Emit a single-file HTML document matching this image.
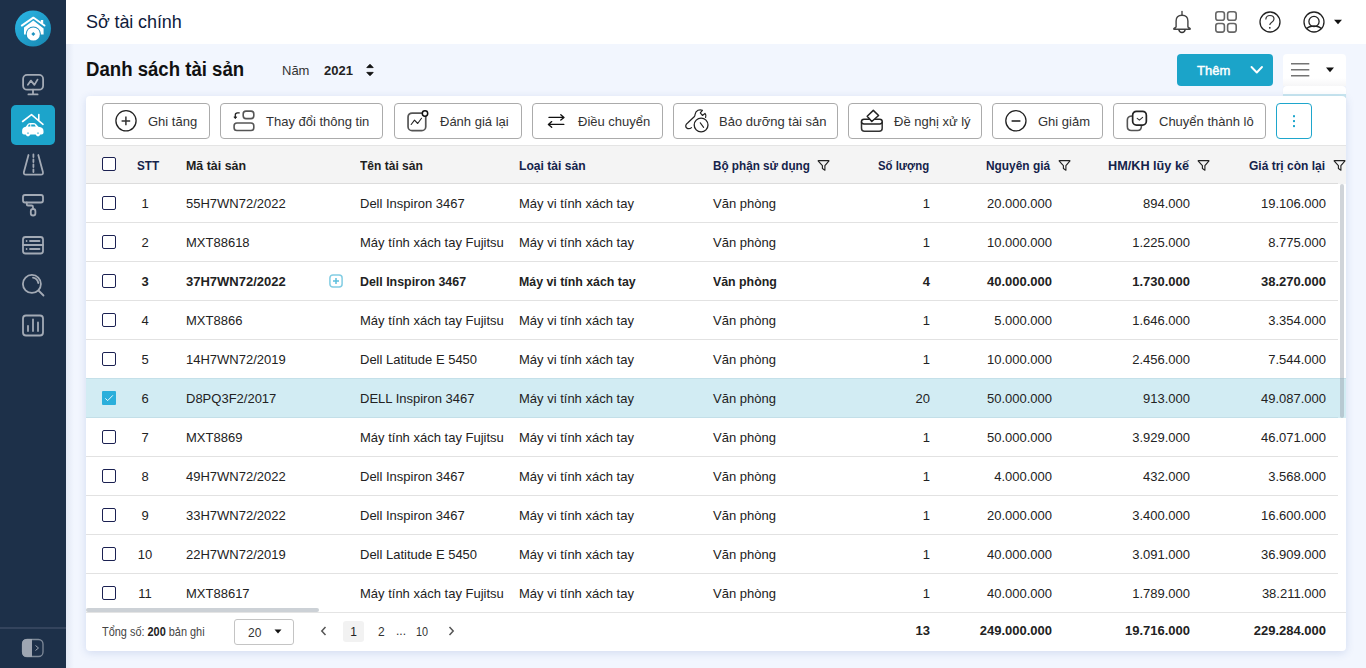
<!DOCTYPE html>
<html><head><meta charset="utf-8">
<style>
*{box-sizing:border-box;margin:0;padding:0}
html,body{width:1366px;height:668px;overflow:hidden;background:#f2f6fe;font-family:"Liberation Sans",sans-serif;color:#222}
.a{position:absolute}
.t13{font-size:13px;line-height:15px;white-space:nowrap}
.b{font-weight:700}
.btn{top:103px;height:36px;border:1px solid #ababab;border-radius:4px;background:#fff}
.btn span{position:absolute;top:10px;font-size:13px;line-height:15px;color:#333;white-space:nowrap}
.cb{position:absolute;left:16px;top:12px;width:14px;height:14px;border:1.5px solid #1b2152;border-radius:2px;background:#fff}
.c{position:absolute;top:12px;font-size:13px;line-height:15px;white-space:nowrap;color:#222}
.hc{position:absolute;top:12px;font-size:13px;line-height:15px;font-weight:700;white-space:nowrap}
.cond{display:inline-block;transform-origin:0 50%}
</style></head><body>

<div class="a" style="left:0;top:0;width:66px;height:668px;background:#1d3049"></div>
<svg class="a" style="left:0;top:0" width="66" height="668" viewBox="0 0 66 668">
 <defs><linearGradient id="lg" x1="0" y1="0" x2="1" y2="1"><stop offset="0" stop-color="#2bb8e6"/><stop offset="1" stop-color="#1786b0"/></linearGradient></defs>
 <circle cx="33" cy="28.5" r="18" fill="url(#lg)"/>
 <path d="M24 27.5 L33.3 20.6 L43.6 28.5 L43.6 34.5 L24 34.5 Z" fill="#fff"/>
 <path d="M21.8 25.6 L33.3 17.6 L44.5 25.6" stroke="#fff" stroke-width="1.9" fill="none" stroke-linecap="round" stroke-linejoin="round"/>
 <rect x="40.8" y="20" width="2.4" height="3.5" fill="#fff"/>
 <circle cx="33.3" cy="34" r="7.6" fill="#1d93c0"/>
 <circle cx="33.3" cy="34" r="6.6" fill="#fff"/>
 <path d="M33.3 32 L35.3 34 L33.3 36 L31.3 34 Z" fill="#1d93c0"/>
 <!-- monitor -->
 <rect x="23.1" y="74.9" width="20" height="14.8" rx="4" stroke="#a3aab5" fill="none" stroke-width="1.8" stroke-linecap="round" stroke-linejoin="round"/>
 <path d="M27.9 84.8 L30.9 80.6 L34.4 84.9 L37.5 79.6" stroke="#a3aab5" fill="none" stroke-width="1.8" stroke-linecap="round" stroke-linejoin="round" stroke-width="1.5"/>
 <path d="M33 89.7 L33 94.2 M28.4 94.4 L37.6 94.4" stroke="#a3aab5" fill="none" stroke-width="1.8" stroke-linecap="round" stroke-linejoin="round"/>
 <!-- active -->
 <rect x="11" y="105" width="44" height="40" rx="5" fill="#1ca4cb"/>
 <path d="M22.6 121.5 L31.5 114.6 L43 124.3" stroke="#fff" stroke-width="1.6" fill="none" stroke-linecap="round" stroke-linejoin="round"/>
 <path d="M38.8 114.6 L38.8 120" stroke="#fff" stroke-width="1.6" stroke-linecap="round"/>
 <path d="M22.1 131 Q22.1 127.2 25.8 126.8 L27.6 124.3 Q28.6 123 30.6 123 L33.2 123 Q35.2 123 36.4 124.4 L38.4 126.8 Q43.5 127.1 43.5 131 L43.5 132.8 Q43.5 134.5 41.5 134.5 L24 134.5 Q22.1 134.5 22.1 132.8 Z" fill="#fff"/>
 <circle cx="28" cy="134.3" r="2.1" fill="#fff"/><circle cx="38" cy="134.3" r="2.1" fill="#fff"/>
 <path d="M26.9 133.6 A1.1 1.1 0 0 1 29.1 133.6 Z M36.9 133.6 A1.1 1.1 0 0 1 39.1 133.6 Z" fill="#1ca4cb"/>
 <path d="M27.8 126.4 L28.9 124.6 L30.3 124.6 L30.3 126.4 Z M31.2 126.4 L31.2 124.6 L34.6 124.6 L35.8 126.4 Z" fill="#1ca4cb"/>
 <!-- road -->
 <path d="M28.5 155 L23.9 172 Q23.3 174.6 25.9 174.6 L40.9 174.6 Q43.5 174.6 42.9 172 L38.3 155" stroke="#a3aab5" fill="none" stroke-width="1.8" stroke-linecap="round" stroke-linejoin="round"/>
 <path d="M33.4 154.5 L33.4 173" stroke="#a3aab5" fill="none" stroke-width="1.8" stroke-linecap="round" stroke-linejoin="round" stroke-width="1.2" stroke-linecap="butt" stroke-dasharray="2.6 2.4"/>
 <!-- roller -->
 <rect x="23" y="195" width="20" height="7.5" rx="2" stroke="#a3aab5" fill="none" stroke-width="1.8" stroke-linecap="round" stroke-linejoin="round"/>
 <path d="M26.8 202.5 L26.8 204.5 Q26.8 205.5 28 205.5 L31.5 205.5 Q33 205.5 33 207 L33 209" stroke="#a3aab5" fill="none" stroke-width="1.8" stroke-linecap="round" stroke-linejoin="round"/>
 <rect x="30.8" y="209" width="4.6" height="6.5" rx="2.3" stroke="#a3aab5" fill="none" stroke-width="1.8" stroke-linecap="round" stroke-linejoin="round"/>
 <!-- server -->
 <rect x="23" y="237" width="20" height="16.5" rx="2.5" stroke="#a3aab5" fill="none" stroke-width="1.8" stroke-linecap="round" stroke-linejoin="round"/>
 <path d="M23 245 L43 245" stroke="#a3aab5" fill="none" stroke-width="1.8" stroke-linecap="round" stroke-linejoin="round"/>
 <path d="M26.6 241 L26.6 241 M30 241 L39.5 241 M26.6 249 L26.6 249 M30 249 L39.5 249" stroke="#a3aab5" fill="none" stroke-width="1.8" stroke-linecap="round" stroke-linejoin="round"/>
 <!-- search -->
 <circle cx="31.9" cy="283.9" r="9" stroke="#a3aab5" fill="none" stroke-width="1.8" stroke-linecap="round" stroke-linejoin="round"/>
 <path d="M38.5 290.5 L43.5 295.5" stroke="#a3aab5" fill="none" stroke-width="1.8" stroke-linecap="round" stroke-linejoin="round"/>
 <path d="M33 277.6 Q37.5 278.5 38.3 283" stroke="#a3aab5" fill="none" stroke-width="1.8" stroke-linecap="round" stroke-linejoin="round" stroke-width="1.5"/>
 <!-- chart -->
 <rect x="23" y="315.5" width="20" height="20" rx="3" stroke="#a3aab5" fill="none" stroke-width="1.8" stroke-linecap="round" stroke-linejoin="round"/>
 <path d="M28 325.8 L28 331 M33 319.5 L33 331 M38 322.5 L38 331" stroke="#a3aab5" fill="none" stroke-width="1.8" stroke-linecap="round" stroke-linejoin="round"/>
 <!-- bottom -->
 <rect x="0" y="627" width="66" height="2" fill="#34445d"/>
 <rect x="22.5" y="639.5" width="20.5" height="17" rx="4.5" fill="none" stroke="#7f8a99" stroke-width="1.3"/>
 <path d="M27 639 L32 639 L32 657 L27 657 Q22 657 22 652 L22 644 Q22 639 27 639 Z" fill="#9ea6b2"/>
 <path d="M35.5 645.5 L38.5 648 L35.5 650.5" stroke="#9ea6b2" stroke-width="1" fill="none"/>
</svg>


<div class="a" style="left:66px;top:0;width:1300px;height:44px;background:#fff"></div>
<div class="a" style="left:86px;top:11px;font-size:18px;line-height:22px;color:#0f1b3b;white-space:nowrap;letter-spacing:-0.1px">Sở tài chính</div>
<svg class="a" style="left:1160px;top:0" width="206" height="44" viewBox="1160 0 206 44">
 <path d="M1182 11.6 L1182 15" stroke="#555" stroke-width="1.5" stroke-linecap="round"/>
 <path d="M1176.1 26.8 L1176.1 21 Q1176.1 15.2 1182 15.2 Q1187.9 15.2 1187.9 21 L1187.9 26.8 Q1188.3 27.5 1190 28.4 Q1190.9 29.3 1189.6 29.3 L1174.4 29.3 Q1173.1 29.3 1174 28.4 Q1175.7 27.5 1176.1 26.8 Z" fill="none" stroke="#444" stroke-width="1.4" stroke-linejoin="round"/>
 <path d="M1178.8 29.6 Q1179.4 32.5 1182 32.5 Q1184.6 32.5 1185.2 29.6" fill="none" stroke="#333" stroke-width="1.4"/>
 <rect x="1215.8" y="11.7" width="8.6" height="8.6" rx="2.3" fill="none" stroke="#666" stroke-width="1.6"/>
 <rect x="1227.6" y="11.7" width="8.6" height="8.6" rx="2.3" fill="none" stroke="#666" stroke-width="1.6"/>
 <rect x="1215.8" y="23.5" width="8.6" height="8.6" rx="2.3" fill="none" stroke="#666" stroke-width="1.6"/>
 <rect x="1227.6" y="23.5" width="8.6" height="8.6" rx="2.3" fill="none" stroke="#666" stroke-width="1.6"/>
 <circle cx="1270" cy="22" r="10" fill="none" stroke="#222" stroke-width="1.3"/>
 <path d="M1265.8 19.5 Q1266 15.5 1270 15.5 Q1274 15.5 1274 19 Q1274 21 1271.5 22.5 Q1269.8 23.8 1269.8 25" fill="none" stroke="#333" stroke-width="1.2"/>
 <circle cx="1269.8" cy="27.8" r="0.9" fill="#222"/>
 <circle cx="1314" cy="22" r="10" fill="none" stroke="#222" stroke-width="1.3"/>
 <circle cx="1314" cy="21.5" r="5.1" fill="none" stroke="#222" stroke-width="1.3"/>
 <path d="M1306.5 28.8 Q1309 26 1314 26 Q1319 26 1321.5 28.8" fill="none" stroke="#222" stroke-width="1.3"/>
 <path d="M1334 19.8 L1342 19.8 L1338 24.2 Z" fill="#111"/>
</svg>


<div class="a" style="left:86px;top:57px;font-size:20px;line-height:24px;font-weight:700;color:#111;white-space:nowrap"><span class="cond" style="transform:scaleX(.93)">Danh sách tài sản</span></div>
<div class="a t13" style="left:282px;top:63px;color:#333">Năm</div>
<div class="a t13 b" style="left:324px;top:63px;color:#222">2021</div>
<svg class="a" style="left:364px;top:62px" width="12" height="16" viewBox="0 0 12 16"><path d="M2.8 5.6 L6 2.3 L9.2 5.6 Z M2.8 10.4 L6 13.7 L9.2 10.4 Z" fill="#111" stroke="#111" stroke-width="0.9" stroke-linejoin="round"/></svg>
<div class="a" style="left:1177px;top:54px;width:96px;height:32px;background:#1ba4c9;border-radius:4px"></div>
<div class="a t13" style="left:1197px;top:63px;color:#fff;-webkit-text-stroke:0.45px #fff">Thêm</div>
<svg class="a" style="left:1248px;top:62px" width="18" height="16" viewBox="0 0 18 16"><path d="M3.5 5 L8.8 10.5 L14 5" fill="none" stroke="#fff" stroke-width="1.9" stroke-linecap="round" stroke-linejoin="round"/></svg>
<div class="a" style="left:1283px;top:86px;width:63px;height:20px;background:#fff;border-radius:4px;box-shadow:0 -1px 2px rgba(0,0,0,.03)"></div>
<div class="a" style="left:1283px;top:94px;width:63px;height:4px;background:#c9e7f0"></div>
<div class="a" style="left:1283px;top:54px;width:63px;height:32px;background:linear-gradient(#fff 0,#fff 24px,#f6f6f7 32px);border-radius:4px 4px 0 0"></div>
<svg class="a" style="left:1283px;top:54px" width="63" height="32" viewBox="0 0 63 32"><path d="M8 9.8 L26.3 9.8 M8 15.8 L26.3 15.8 M8 21.8 L26.3 21.8" stroke="#747474" stroke-width="1.6"/><path d="M43 13.5 L51 13.5 L47 18.3 Z" fill="#111"/></svg>

<div class="a" style="left:86px;top:96px;width:1260px;height:555px;background:#fff;border-radius:4px;box-shadow:0 2px 8px rgba(50,90,170,.16)"></div>
<div class="btn a" style="left:102px;width:108px"><svg width="30" height="30" viewBox="0 0 30 30" style="position:absolute;left:9px;top:2px"><circle cx="14" cy="14.8" r="10.1" fill="none" stroke="#222" stroke-width="1.3"/><path d="M9.6 15 L18.2 15 M13.9 10.6 L13.9 19.2" fill="none" stroke="#333" stroke-width="1.5"/></svg><span style="left:45px">Ghi tăng</span></div><div class="btn a" style="left:220px;width:163px"><svg width="30" height="30" viewBox="0 0 30 30" style="position:absolute;left:9px;top:2px"><rect x="13.2" y="5.1" width="10.6" height="7.5" rx="2.8" fill="none" stroke="#555" stroke-width="1.6"/><rect x="4.1" y="17" width="19.7" height="7.5" rx="2.8" fill="none" stroke="#555" stroke-width="1.6"/><path d="M9.7 6.9 L7.5 6.9 Q5.3 6.9 5.3 9.1 L5.3 11" fill="none" stroke="#222" stroke-width="1.3"/><path d="M3.9 10.9 L5.3 12.7 L6.7 10.9 Z" fill="#222" stroke="#222" stroke-width="0.8" stroke-linejoin="round"/></svg><span style="left:45px">Thay đổi thông tin</span></div><div class="btn a" style="left:394px;width:128px"><svg width="30" height="30" viewBox="0 0 30 30" style="position:absolute;left:9px;top:2px"><rect x="4.05" y="7.05" width="17.7" height="17.6" rx="4" fill="none" stroke="#555" stroke-width="1.7"/><circle cx="21" cy="7.5" r="2.7" fill="#fff" stroke="#111" stroke-width="1.5"/><path d="M7.2 18.5 L10.5 14.2 L13.7 17.5 L17.5 12.3" fill="none" stroke="#222" stroke-width="1.1" stroke-linecap="round" stroke-linejoin="round"/></svg><span style="left:45px">Đánh giá lại</span></div><div class="btn a" style="left:532px;width:131px"><svg width="30" height="30" viewBox="0 0 30 30" style="position:absolute;left:9px;top:2px"><path d="M7 11.4 L22 11.4 M18.8 8.7 L22 11.4 L18.8 14.1 M21.8 18.4 L6.4 18.4 M9.7 15.6 L6.4 18.4 L9.7 21.2" fill="none" stroke="#111" stroke-width="1.35" stroke-linecap="round" stroke-linejoin="round"/></svg><span style="left:45px">Điều chuyển</span></div><div class="btn a" style="left:673px;width:165px"><svg width="30" height="30" viewBox="0 0 30 30" style="position:absolute;left:9px;top:2px"><circle cx="18.1" cy="19" r="6.9" fill="none" stroke="#222" stroke-width="1.3"/><path d="M17.3 16.8 L20.6 21.3" fill="none" stroke="#222" stroke-width="1.1" stroke-linecap="round"/><path d="M8.5 21.6 Q7 23 4.7 22.6 Q2.4 21.8 2.8 19.4 Q3.1 18 4.6 17 L11.2 10.8 Q12 10 12.1 8.3 Q12.5 5.5 15 4.3 Q17.2 3.3 19.4 4.3 L17.3 6.9 L19.4 9.4 L22 7.4 Q23.5 9 22.6 11.5" fill="none" stroke="#222" stroke-width="1.2" stroke-linejoin="round" stroke-linecap="round"/></svg><span style="left:45px">Bảo dưỡng tài sản</span></div><div class="btn a" style="left:848px;width:134px"><svg width="30" height="30" viewBox="0 0 30 30" style="position:absolute;left:9px;top:2px"><path d="M3.5 15.6 L3.5 22.3 Q3.5 25.3 6.5 25.3 L21.2 25.3 Q24.2 25.3 24.2 22.3 L24.2 15.6" fill="none" stroke="#333" stroke-width="1.5"/><path d="M6 13.2 Q3.5 13.2 3.5 15.6 Q3.5 18 6 18 L21.7 18 Q24.2 18 24.2 15.6 Q24.2 13.2 21.7 13.2 Z" fill="#fff" stroke="#222" stroke-width="1.5"/><path d="M15.3 4.4 L20.6 9.5 L13.8 15.5 L9.2 10.2 Z" fill="#fff" stroke="#222" stroke-width="1.5" stroke-linejoin="round"/></svg><span style="left:45px">Đề nghị xử lý</span></div><div class="btn a" style="left:992px;width:111px"><svg width="30" height="30" viewBox="0 0 30 30" style="position:absolute;left:9px;top:2px"><circle cx="13.9" cy="14.8" r="10.1" fill="none" stroke="#222" stroke-width="1.3"/><path d="M9.6 15 L18.4 15" fill="none" stroke="#333" stroke-width="1.7"/></svg><span style="left:45px">Ghi giảm</span></div><div class="btn a" style="left:1113px;width:153px"><svg width="30" height="30" viewBox="0 0 30 30" style="position:absolute;left:9px;top:2px"><path d="M9.6 9.95 Q4.35 9.95 4.35 14 L4.35 20.5 Q4.35 24.45 8.35 24.45 L14.5 24.45 Q18.45 24.45 18.45 19.7" fill="none" stroke="#555" stroke-width="1.6"/><rect x="9.65" y="5.35" width="13.7" height="13.7" rx="3.8" fill="#fff" stroke="#222" stroke-width="1.7"/><path d="M14.2 12.3 L16.4 14.2 L19.6 11.3" fill="none" stroke="#333" stroke-width="1.1" stroke-linecap="round" stroke-linejoin="round"/></svg><span style="left:45px">Chuyển thành lô</span></div>
<div class="a" style="left:1276px;top:103px;width:36px;height:36px;border:1.4px solid #1ea6cc;border-radius:4px;background:#fff"></div>
<svg class="a" style="left:1276px;top:103px" width="36" height="36"><rect x="17" y="12.2" width="2" height="2" fill="#1ea6cc"/><rect x="17" y="17.1" width="2" height="2" fill="#1ea6cc"/><rect x="17" y="22.1" width="2" height="2" fill="#1ea6cc"/></svg>
<div class="a" style="left:86px;top:145px;width:1260px;height:39px;background:#f4f4f4;border-top:1px solid #e4e4e4"></div>
<div class="a" style="left:86px;top:183px;width:1252px;height:1px;background:#dcdcdc"></div>
<div class="a" style="left:86px;top:146px;width:1252px;height:38px">
 <div class="cb" style="top:11px"></div>
 <div class="hc" style="left:51px;color:#15234b"><span class="cond" style="transform:scaleX(0.9)">STT</span></div>
 <div class="hc" style="left:100px;color:#1e1e1e"><span class="cond" style="transform:scaleX(0.955)">Mã tài sản</span></div>
 <div class="hc" style="left:274px;color:#1e1e1e"><span class="cond" style="transform:scaleX(0.925)">Tên tài sản</span></div>
 <div class="hc" style="left:433px;color:#15234b"><span class="cond" style="transform:scaleX(0.93)">Loại tài sản</span></div>
 <div class="hc" style="left:627px;color:#15234b"><span class="cond" style="transform:scaleX(0.9)">Bộ phận sử dụng</span></div>
 <svg width="13" height="13" viewBox="0 0 13 13" style="position:absolute;top:13px;left:731px"><path d="M1.5 1.6 L11.6 1.6 Q12.2 1.6 11.8 2.2 L7.9 6.6 L7.9 11.2 L5.4 9.6 L5.4 6.6 L1.3 2.2 Q0.9 1.6 1.5 1.6 Z" fill="none" stroke="#222" stroke-width="1.15" stroke-linejoin="round"/></svg>
 <div class="hc" style="left:792px;color:#15234b"><span class="cond" style="transform:scaleX(0.875)">Số lượng</span></div>
 <div class="hc" style="left:900px;color:#15234b"><span class="cond" style="transform:scaleX(0.915)">Nguyên giá</span></div>
 <svg width="13" height="13" viewBox="0 0 13 13" style="position:absolute;top:13px;left:972px"><path d="M1.5 1.6 L11.6 1.6 Q12.2 1.6 11.8 2.2 L7.9 6.6 L7.9 11.2 L5.4 9.6 L5.4 6.6 L1.3 2.2 Q0.9 1.6 1.5 1.6 Z" fill="none" stroke="#222" stroke-width="1.15" stroke-linejoin="round"/></svg>
 <div class="hc" style="left:1022px;color:#15234b"><span class="cond" style="transform:scaleX(0.975)">HM/KH lũy kế</span></div>
 <svg width="13" height="13" viewBox="0 0 13 13" style="position:absolute;top:13px;left:1111px"><path d="M1.5 1.6 L11.6 1.6 Q12.2 1.6 11.8 2.2 L7.9 6.6 L7.9 11.2 L5.4 9.6 L5.4 6.6 L1.3 2.2 Q0.9 1.6 1.5 1.6 Z" fill="none" stroke="#222" stroke-width="1.15" stroke-linejoin="round"/></svg>
 <div class="hc" style="left:1163px;color:#15234b"><span class="cond" style="transform:scaleX(0.923)">Giá trị còn lại</span></div>
 <svg width="13" height="13" viewBox="0 0 13 13" style="position:absolute;top:13px;left:1247px"><path d="M1.5 1.6 L11.6 1.6 Q12.2 1.6 11.8 2.2 L7.9 6.6 L7.9 11.2 L5.4 9.6 L5.4 6.6 L1.3 2.2 Q0.9 1.6 1.5 1.6 Z" fill="none" stroke="#222" stroke-width="1.15" stroke-linejoin="round"/></svg>
</div>
<div class="a" style="left:86px;top:184px;width:1252px;height:39px;border-bottom:1px solid #e2e2e2"><div class="cb"></div><div class="c" style="left:44px;width:30px;text-align:center;">1</div><div class="c" style="left:100px;">55H7WN72/2022</div><div class="c" style="left:274px;">Dell Inspiron 3467</div><div class="c" style="left:433px;">Máy vi tính xách tay</div><div class="c" style="left:627px;">Văn phòng</div><div class="c" style="left:644px;width:200px;text-align:right;">1</div><div class="c" style="left:766px;width:200px;text-align:right;">20.000.000</div><div class="c" style="left:904px;width:200px;text-align:right;">894.000</div><div class="c" style="left:1040px;width:200px;text-align:right;">19.106.000</div></div><div class="a" style="left:86px;top:223px;width:1252px;height:39px;border-bottom:1px solid #e2e2e2"><div class="cb"></div><div class="c" style="left:44px;width:30px;text-align:center;">2</div><div class="c" style="left:100px;">MXT88618</div><div class="c" style="left:274px;">Máy tính xách tay Fujitsu</div><div class="c" style="left:433px;">Máy vi tính xách tay</div><div class="c" style="left:627px;">Văn phòng</div><div class="c" style="left:644px;width:200px;text-align:right;">1</div><div class="c" style="left:766px;width:200px;text-align:right;">10.000.000</div><div class="c" style="left:904px;width:200px;text-align:right;">1.225.000</div><div class="c" style="left:1040px;width:200px;text-align:right;">8.775.000</div></div><div class="a" style="left:86px;top:262px;width:1252px;height:39px;border-bottom:1px solid #e2e2e2"><div class="cb"></div><div class="c" style="left:44px;width:30px;text-align:center;font-weight:700;">3</div><div class="c" style="left:100px;font-weight:700;">37H7WN72/2022</div><svg width="14" height="14" style="position:absolute;left:243px;top:12px" viewBox="0 0 14 14"><rect x="0.9" y="0.9" width="12.2" height="12.2" rx="3" fill="none" stroke="#82cde3" stroke-width="1.5"/><path d="M4 7 L10 7 M7 4 L7 10" stroke="#5bbfdd" stroke-width="1.5"/></svg><div class="c" style="left:274px;font-weight:700;"><span class="cond" style="transform:scaleX(0.953)">Dell Inspiron 3467</span></div><div class="c" style="left:433px;font-weight:700;"><span class="cond" style="transform:scaleX(0.95)">Máy vi tính xách tay</span></div><div class="c" style="left:627px;font-weight:700;"><span class="cond" style="transform:scaleX(0.95)">Văn phòng</span></div><div class="c" style="left:644px;width:200px;text-align:right;font-weight:700;">4</div><div class="c" style="left:766px;width:200px;text-align:right;font-weight:700;">40.000.000</div><div class="c" style="left:904px;width:200px;text-align:right;font-weight:700;">1.730.000</div><div class="c" style="left:1040px;width:200px;text-align:right;font-weight:700;">38.270.000</div></div><div class="a" style="left:86px;top:301px;width:1252px;height:39px;border-bottom:1px solid #e2e2e2"><div class="cb"></div><div class="c" style="left:44px;width:30px;text-align:center;">4</div><div class="c" style="left:100px;">MXT8866</div><div class="c" style="left:274px;">Máy tính xách tay Fujitsu</div><div class="c" style="left:433px;">Máy vi tính xách tay</div><div class="c" style="left:627px;">Văn phòng</div><div class="c" style="left:644px;width:200px;text-align:right;">1</div><div class="c" style="left:766px;width:200px;text-align:right;">5.000.000</div><div class="c" style="left:904px;width:200px;text-align:right;">1.646.000</div><div class="c" style="left:1040px;width:200px;text-align:right;">3.354.000</div></div><div class="a" style="left:86px;top:340px;width:1252px;height:39px;border-bottom:1px solid #e2e2e2"><div class="cb"></div><div class="c" style="left:44px;width:30px;text-align:center;">5</div><div class="c" style="left:100px;">14H7WN72/2019</div><div class="c" style="left:274px;">Dell Latitude E 5450</div><div class="c" style="left:433px;">Máy vi tính xách tay</div><div class="c" style="left:627px;">Văn phòng</div><div class="c" style="left:644px;width:200px;text-align:right;">1</div><div class="c" style="left:766px;width:200px;text-align:right;">10.000.000</div><div class="c" style="left:904px;width:200px;text-align:right;">2.456.000</div><div class="c" style="left:1040px;width:200px;text-align:right;">7.544.000</div></div><div class="a" style="left:86px;top:378px;width:1260px;height:40px;background:#d2ecf3;border-top:1px solid #c4e0e9"></div><div class="a" style="left:86px;top:379px;width:1252px;height:39px;border-bottom:1px solid #c3dfe8"><div class="cb" style="background:#2bafdb;border:none;width:14px;height:14px;border-radius:1px"><svg width="14" height="14" style="position:absolute;left:0;top:0"><path d="M3.3 7.4 L5.7 9.6 L10.9 4.3" fill="none" stroke="#fff" stroke-width="0.9"/></svg></div><div class="c" style="left:44px;width:30px;text-align:center;">6</div><div class="c" style="left:100px;">D8PQ3F2/2017</div><div class="c" style="left:274px;">DELL Inspiron 3467</div><div class="c" style="left:433px;">Máy vi tính xách tay</div><div class="c" style="left:627px;">Văn phòng</div><div class="c" style="left:644px;width:200px;text-align:right;">20</div><div class="c" style="left:766px;width:200px;text-align:right;">50.000.000</div><div class="c" style="left:904px;width:200px;text-align:right;">913.000</div><div class="c" style="left:1040px;width:200px;text-align:right;">49.087.000</div></div><div class="a" style="left:86px;top:418px;width:1252px;height:39px;border-bottom:1px solid #e2e2e2"><div class="cb"></div><div class="c" style="left:44px;width:30px;text-align:center;">7</div><div class="c" style="left:100px;">MXT8869</div><div class="c" style="left:274px;">Máy tính xách tay Fujitsu</div><div class="c" style="left:433px;">Máy vi tính xách tay</div><div class="c" style="left:627px;">Văn phòng</div><div class="c" style="left:644px;width:200px;text-align:right;">1</div><div class="c" style="left:766px;width:200px;text-align:right;">50.000.000</div><div class="c" style="left:904px;width:200px;text-align:right;">3.929.000</div><div class="c" style="left:1040px;width:200px;text-align:right;">46.071.000</div></div><div class="a" style="left:86px;top:457px;width:1252px;height:39px;border-bottom:1px solid #e2e2e2"><div class="cb"></div><div class="c" style="left:44px;width:30px;text-align:center;">8</div><div class="c" style="left:100px;">49H7WN72/2022</div><div class="c" style="left:274px;">Dell Inspiron 3467</div><div class="c" style="left:433px;">Máy vi tính xách tay</div><div class="c" style="left:627px;">Văn phòng</div><div class="c" style="left:644px;width:200px;text-align:right;">1</div><div class="c" style="left:766px;width:200px;text-align:right;">4.000.000</div><div class="c" style="left:904px;width:200px;text-align:right;">432.000</div><div class="c" style="left:1040px;width:200px;text-align:right;">3.568.000</div></div><div class="a" style="left:86px;top:496px;width:1252px;height:39px;border-bottom:1px solid #e2e2e2"><div class="cb"></div><div class="c" style="left:44px;width:30px;text-align:center;">9</div><div class="c" style="left:100px;">33H7WN72/2022</div><div class="c" style="left:274px;">Dell Inspiron 3467</div><div class="c" style="left:433px;">Máy vi tính xách tay</div><div class="c" style="left:627px;">Văn phòng</div><div class="c" style="left:644px;width:200px;text-align:right;">1</div><div class="c" style="left:766px;width:200px;text-align:right;">20.000.000</div><div class="c" style="left:904px;width:200px;text-align:right;">3.400.000</div><div class="c" style="left:1040px;width:200px;text-align:right;">16.600.000</div></div><div class="a" style="left:86px;top:535px;width:1252px;height:39px;border-bottom:1px solid #e2e2e2"><div class="cb"></div><div class="c" style="left:44px;width:30px;text-align:center;">10</div><div class="c" style="left:100px;">22H7WN72/2019</div><div class="c" style="left:274px;">Dell Latitude E 5450</div><div class="c" style="left:433px;">Máy vi tính xách tay</div><div class="c" style="left:627px;">Văn phòng</div><div class="c" style="left:644px;width:200px;text-align:right;">1</div><div class="c" style="left:766px;width:200px;text-align:right;">40.000.000</div><div class="c" style="left:904px;width:200px;text-align:right;">3.091.000</div><div class="c" style="left:1040px;width:200px;text-align:right;">36.909.000</div></div><div class="a" style="left:86px;top:574px;width:1252px;height:39px;border-bottom:1px solid #e2e2e2"><div class="cb"></div><div class="c" style="left:44px;width:30px;text-align:center;">11</div><div class="c" style="left:100px;">MXT88617</div><div class="c" style="left:274px;">Máy tính xách tay Fujitsu</div><div class="c" style="left:433px;">Máy vi tính xách tay</div><div class="c" style="left:627px;">Văn phòng</div><div class="c" style="left:644px;width:200px;text-align:right;">1</div><div class="c" style="left:766px;width:200px;text-align:right;">40.000.000</div><div class="c" style="left:904px;width:200px;text-align:right;">1.789.000</div><div class="c" style="left:1040px;width:200px;text-align:right;">38.211.000</div></div>
<div class="a" style="left:1340px;top:184px;width:4px;height:234px;border-radius:2px;background:rgba(150,160,170,.45)"></div>
<div class="a" style="left:86px;top:608px;width:233px;height:4px;border-radius:2px;background:#ccd1d6"></div>
<div class="a" style="left:86px;top:612px;width:1260px;height:1px;background:#e4e4e4"></div>
<div class="a" style="left:102px;top:625px;font-size:12px;line-height:15px;color:#444;white-space:nowrap"><span class="cond" style="transform:scaleX(.91)">Tổng số: <b style="color:#222">200</b> bản ghi</span></div>
<div class="a" style="left:234px;top:619px;width:60px;height:26px;border:1px solid #c4c4c4;border-radius:3px;background:#fff"></div>
<div class="a" style="left:248px;top:626px;font-size:12px;line-height:15px;color:#333">20</div>
<svg class="a" style="left:272px;top:627px" width="12" height="10"><path d="M2.5 2.5 L9.5 2.5 L6 6.5 Z" fill="#111"/></svg>
<svg class="a" style="left:318px;top:625px" width="12" height="12"><path d="M7.5 2 L3.8 6 L7.5 10" fill="none" stroke="#555" stroke-width="1.5"/></svg>
<div class="a" style="left:343px;top:621px;width:21px;height:21px;background:#f2f2f2;border-radius:3px"></div>
<div class="a" style="left:343px;top:625px;width:21px;text-align:center;font-size:12px;line-height:15px;color:#222">1</div>
<div class="a" style="left:378px;top:625px;font-size:12px;line-height:15px;color:#333">2</div>
<div class="a" style="left:396px;top:624px;font-size:12px;line-height:15px;color:#333">...</div>
<div class="a" style="left:416px;top:625px;font-size:12px;line-height:15px;color:#333"><span class="cond" style="transform:scaleX(.9)">10</span></div>
<svg class="a" style="left:445px;top:625px" width="12" height="12"><path d="M4.5 2 L8.2 6 L4.5 10" fill="none" stroke="#555" stroke-width="1.5"/></svg>
<div class="a t13 b" style="left:730px;top:623px;width:200px;text-align:right;color:#222">13</div>
<div class="a t13 b" style="left:852px;top:623px;width:200px;text-align:right;color:#222">249.000.000</div>
<div class="a t13 b" style="left:990px;top:623px;width:200px;text-align:right;color:#222">19.716.000</div>
<div class="a t13 b" style="left:1126px;top:623px;width:200px;text-align:right;color:#222">229.284.000</div>

<div class="a" style="left:66px;top:44px;width:8px;height:624px;background:linear-gradient(90deg,rgba(30,60,120,.07),rgba(30,60,120,0))"></div>
</body></html>
